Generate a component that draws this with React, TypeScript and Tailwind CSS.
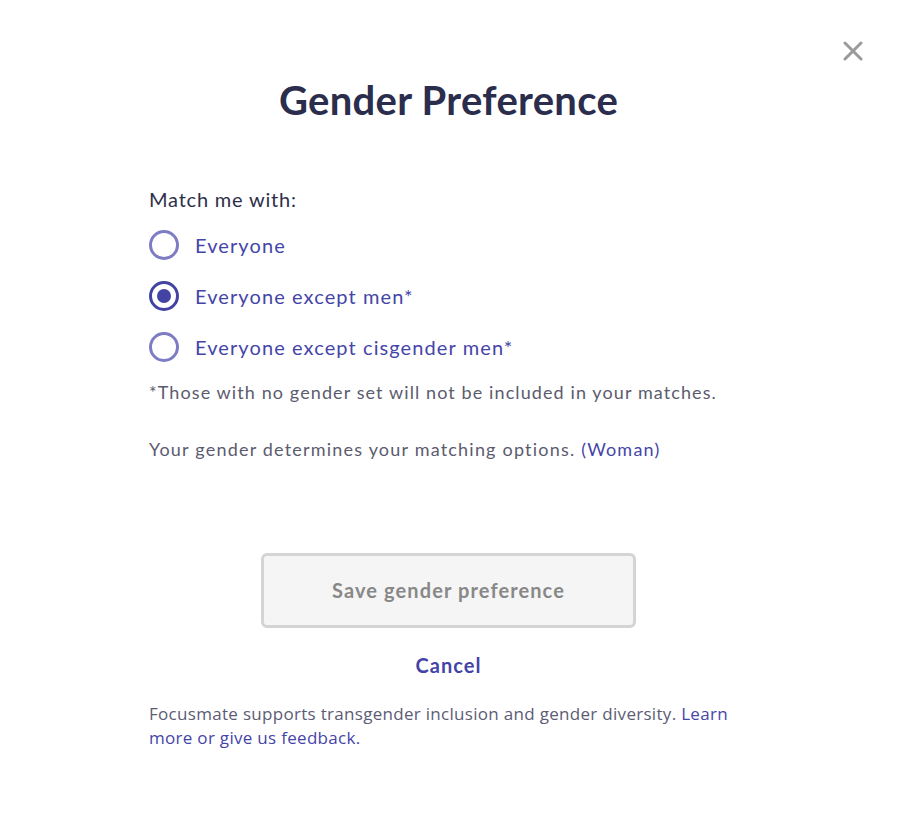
import React, { useState } from "react";

const options = ["Everyone", "Everyone except men*", "Everyone except cisgender men*"];

export default function App() {
  const [sel, setSel] = useState(1);
  return (
    <div className="relative w-[897px] h-[820px] bg-white" style={{ fontFamily: "Lato, 'Noto Sans', sans-serif" }}>
      <button className="absolute right-[33px] top-[40px] w-[22px] h-[22px] flex items-center justify-center">
        <svg width="20" height="20" viewBox="0 0 20 20">
          <path d="M2 2 L18 18 M18 2 L2 18" stroke="#9a9a9a" strokeWidth="3" strokeLinecap="round" />
        </svg>
      </button>
      <div className="flex flex-col items-center pt-[74px]">
        <h1 className="text-[40px] leading-[52px] font-bold text-[#2b2d4d] tracking-[0.3px]">Gender Preference</h1>
      </div>
      <div className="w-[640px] ml-[149px] mt-[61px]">
        <div className="text-[20px] leading-[24px] text-[#2e2f4a] tracking-[0.8px]">Match me with:</div>
        <div className="flex flex-col gap-[21px] mt-[19px]">
          {options.map((o, i) => (
            <label key={o} className="flex items-center gap-[16px] cursor-pointer" onClick={() => setSel(i)}>
              {sel === i ? (
                <span className="w-[30px] h-[30px] rounded-full border-[3px] border-[#4343a3] flex items-center justify-center">
                  <span className="w-[14px] h-[14px] rounded-full bg-[#4343a3]" />
                </span>
              ) : (
                <span className="w-[30px] h-[30px] rounded-full border-[3px] border-[#7d7cc4]" />
              )}
              <span className="text-[20px] leading-[30px] text-[#4545a8] tracking-[1.1px]">{o}</span>
            </label>
          ))}
        </div>
        <p className="mt-[18px] text-[18px] leading-[24px] text-[#5b5b6e] tracking-[1.1px]">
          *Those with no gender set will not be included in your matches.
        </p>
        <p className="mt-[33px] text-[18px] leading-[24px] text-[#5b5b6e] tracking-[1.2px]">
          Your gender determines your matching options. <span className="text-[#4545a8]">(Woman)</span>
        </p>
      </div>
      <div className="flex flex-col items-center mt-[92px]">
        <button className="w-[375px] h-[75px] pb-[2px] rounded-[6px] border-[3px] border-[#d4d4d4] bg-[#f5f5f5] text-[20px] font-bold text-[#888888] tracking-[1.1px]">
          Save gender preference
        </button>
        <button className="mt-[22px] text-[20px] font-bold text-[#4444a8] tracking-[1px]">Cancel</button>
      </div>
      <p
        className="ml-[149px] mt-[22px] w-[600px] text-[17px] leading-[24px] text-[#5c5c74] tracking-[0.3px]"
        style={{ fontFamily: "'Open Sans', 'Noto Sans', sans-serif" }}
      >
        Focusmate supports transgender inclusion and gender diversity.{" "}
        <span className="text-[#4545a8]">Learn more or give us feedback.</span>
      </p>
    </div>
  );
}
